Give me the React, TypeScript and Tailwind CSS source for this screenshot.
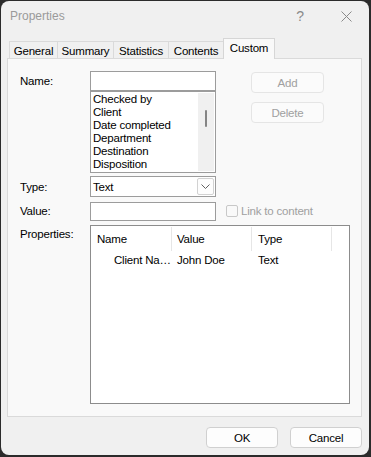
import type { ReactNode } from 'react'

const tabs = [
  { label: 'General', w: 'w-[49px]' },
  { label: 'Summary', w: 'w-[57px]' },
  { label: 'Statistics', w: 'w-[56px]' },
  { label: 'Contents', w: 'w-[56px]' },
]

const names = [
  'Checked by',
  'Client',
  'Date completed',
  'Department',
  'Destination',
  'Disposition',
]

function Label({ children }: { children: ReactNode }) {
  return (
    <div className="flex h-[20px] w-[70px] shrink-0 items-center">
      {children}
    </div>
  )
}

function DialogButton({
  children,
  disabled = false,
}: {
  children: ReactNode
  disabled?: boolean
}) {
  return (
    <button
      type="button"
      disabled={disabled}
      className={
        disabled
          ? 'flex h-[21px] w-[73px] items-center justify-center rounded-[4px] border border-[#e5e5e5] bg-[#fbfbfb] text-[#a0a0a0]'
          : 'flex h-[21px] w-[72px] items-center justify-center rounded-[4px] border border-[#d0d0d0] bg-[#fdfdfd] text-black'
      }
    >
      {children}
    </button>
  )
}

export default function App() {
  return (
    <div className="h-[457px] w-[371px] bg-[#2b2b2b] pt-px pl-px font-['Liberation_Sans',Arial,sans-serif] text-[11.5px] leading-[16px] tracking-[-0.2px] text-black">
      <div className="flex h-[454px] w-[368px] flex-col overflow-hidden rounded-[8px] bg-[#f0f0f0]">
        {/* caption */}
        <div className="flex h-[30px] shrink-0 items-center">
          <span className="pl-[9px] text-[12px] tracking-normal text-[#9a9a9a]">
            Properties
          </span>
          <div className="ml-auto flex">
            <div className="grid h-[30px] w-[46px] place-items-center text-[14px] text-[#8a8a8a]">
              ?
            </div>
            <div className="grid h-[30px] w-[46px] place-items-center">
              <svg width="11" height="11" viewBox="0 0 11 11" aria-hidden="true">
                <path
                  d="M0.5 0.5 L10.5 10.5 M10.5 0.5 L0.5 10.5"
                  stroke="#8a8a8a"
                  strokeWidth="1"
                  fill="none"
                />
              </svg>
            </div>
          </div>
        </div>

        {/* tabs */}
        <div className="mt-[7px] flex h-[21px] shrink-0 items-end pl-[8px]">
          {tabs.map((tab, i) => (
            <div
              key={tab.label}
              className={`${tab.w} ${i > 0 ? '-ml-px' : ''} flex h-[18px] items-center justify-center border border-b-0 border-[#dadada] bg-[#f0f0f0]`}
            >
              {tab.label}
            </div>
          ))}
          <div className="relative z-10 -ml-px flex h-[21px] w-[52px] items-start justify-center border border-b-0 border-[#d6d6d6] bg-[#f9f9f9] pt-[1px]">
            Custom
          </div>
        </div>

        {/* page */}
        <div className="-mt-px ml-[6px] h-[359px] w-[355px] shrink-0 border border-[#dadada] bg-[#f9f9f9] pt-[12px] pl-[12px]">
          <div className="flex">
            <Label>Name:</Label>
            <div className="flex w-[126px] flex-col">
              <div className="h-[20px] border border-[#9c9c9c] bg-white" />
              <div className="flex h-[82px] border border-[#9c9c9c] bg-white">
                <div className="flex-1 pt-[1px] pl-[2px] leading-[13px]">
                  {names.map((n) => (
                    <div key={n} className="whitespace-nowrap">
                      {n}
                    </div>
                  ))}
                </div>
                <div className="my-px mr-px w-[16px] bg-[#f0f0f0] pt-[17px] pl-[7px]">
                  <div className="h-[17px] w-[2px] rounded-full bg-[#858585]" />
                </div>
              </div>
            </div>
            <div className="ml-[35px] flex flex-col gap-[9px] pt-[1px]">
              <DialogButton disabled>Add</DialogButton>
              <DialogButton disabled>Delete</DialogButton>
            </div>
          </div>

          <div className="mt-[3px] flex items-center">
            <Label>Type:</Label>
            <div className="flex h-[21px] w-[126px] items-center border border-[#9c9c9c] bg-white pl-[2px]">
              <span className="flex-1">Text</span>
              <div className="mr-px grid h-[17px] w-[17px] place-items-center rounded-[2px] border border-[#d2d2d2] bg-[#fdfdfd]">
                <svg width="9" height="5" viewBox="0 0 9 5" aria-hidden="true">
                  <path
                    d="M0.5 0.5 L4.5 4.5 L8.5 0.5"
                    stroke="#606060"
                    strokeWidth="1"
                    fill="none"
                  />
                </svg>
              </div>
            </div>
          </div>

          <div className="mt-[4px] flex items-center">
            <Label>Value:</Label>
            <div className="h-[19px] w-[126px] border border-[#9c9c9c] bg-white" />
            <div className="ml-[10px] h-[12px] w-[12px] rounded-[2px] border border-[#c8c8c8]" />
            <span className="ml-[3px] text-[#a0a0a0]">Link to content</span>
          </div>

          <div className="mt-[4px] flex items-start">
            <div className="w-[70px] shrink-0 pt-[1px]">Properties:</div>
            <div className="h-[179px] w-[260px] border border-[#8c8c8c] bg-white">
              <div className="flex h-[26px] pt-[1px]">
                <div className="flex h-[24px] w-[81px] items-center border-r border-[#e6e6e6] pl-[6px]">
                  Name
                </div>
                <div className="flex h-[24px] w-[80px] items-center border-r border-[#e6e6e6] pl-[5px]">
                  Value
                </div>
                <div className="flex h-[24px] w-[80px] items-center border-r border-[#e6e6e6] pl-[6px]">
                  Type
                </div>
              </div>
              <div className="flex h-[16px] items-center">
                <div className="w-[81px] pl-[23px] whitespace-nowrap">
                  Client Na…
                </div>
                <div className="w-[80px] pl-[5px]">John Doe</div>
                <div className="w-[80px] pl-[6px]">Text</div>
              </div>
            </div>
          </div>
        </div>

        {/* footer */}
        <div className="mt-[10px] flex justify-end gap-[12px] pr-[7px]">
          <DialogButton>OK</DialogButton>
          <DialogButton>Cancel</DialogButton>
        </div>
      </div>
    </div>
  )
}
